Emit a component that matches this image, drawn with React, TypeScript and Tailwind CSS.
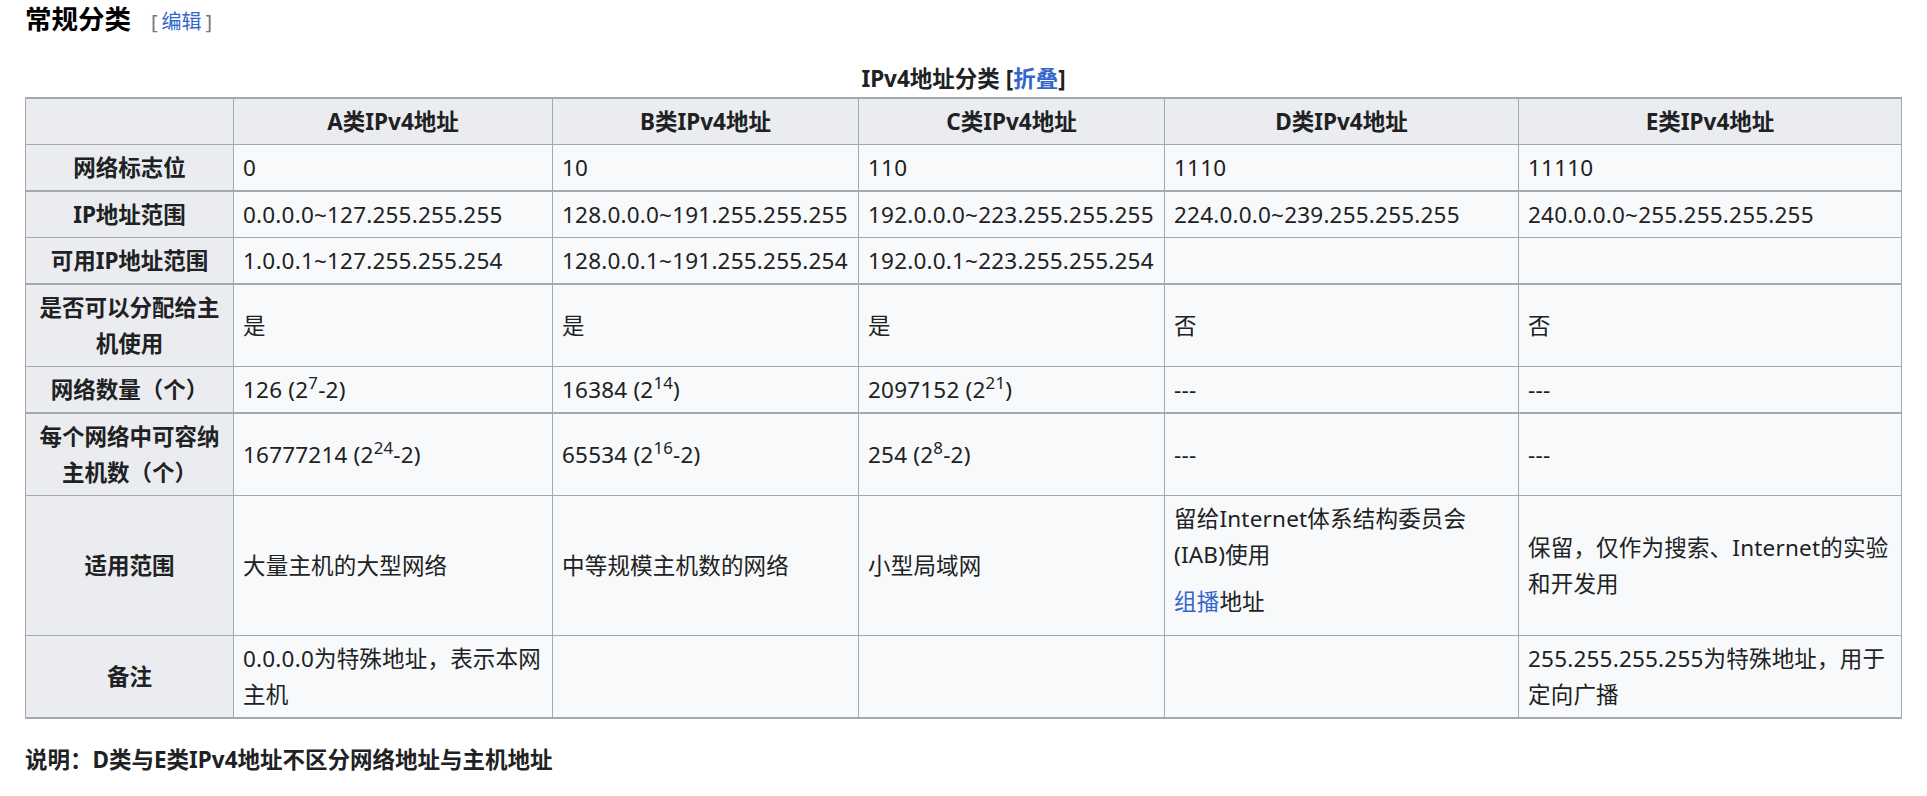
import React from 'react';

type Row = {
  head: React.ReactNode;
  cells: React.ReactNode[];
  thick?: boolean;
};

const rows: Row[] = [
  { head: "网络标志位", cells: ["0", "10", "110", "1110", "11110"], thick: true },
  {
    head: "IP地址范围",
    cells: [
      "0.0.0.0~127.255.255.255",
      "128.0.0.0~191.255.255.255",
      "192.0.0.0~223.255.255.255",
      "224.0.0.0~239.255.255.255",
      "240.0.0.0~255.255.255.255",
    ],
  },
  {
    head: "可用IP地址范围",
    cells: ["1.0.0.1~127.255.255.254", "128.0.0.1~191.255.255.254", "192.0.0.1~223.255.255.254", "", ""],
    thick: true,
  },
  { head: "是否可以分配给主机使用", cells: ["是", "是", "是", "否", "否"] },
  {
    head: "网络数量（个）",
    cells: [
      <>126 (2<sup>7</sup>-2)</>,
      <>16384 (2<sup>14</sup>)</>,
      <>2097152 (2<sup>21</sup>)</>,
      "---",
      "---",
    ],
    thick: true,
  },
  {
    head: "每个网络中可容纳主机数（个）",
    cells: [
      <>16777214 (2<sup>24</sup>-2)</>,
      <>65534 (2<sup>16</sup>-2)</>,
      <>254 (2<sup>8</sup>-2)</>,
      "---",
      "---",
    ],
  },
  {
    head: "适用范围",
    cells: [
      "大量主机的大型网络",
      "中等规模主机数的网络",
      "小型局域网",
      <>
        留给Internet体系结构委员会
        <br />
        (IAB)使用
        <p className="my-[11px]">
          <a className="text-[#3366cc]">组播</a>地址
        </p>
      </>,
      <>
        保留，仅作为搜索、Internet的实验
        <br />
        和开发用
      </>,
    ],
  },
  {
    head: "备注",
    cells: [
      <>
        0.0.0.0为特殊地址，表示本网
        <br />
        主机
      </>,
      "",
      "",
      "",
      <>
        255.255.255.255为特殊地址，用于
        <br />
        定向广播
      </>,
    ],
    thick: true,
  },
];

const classes = ["A", "B", "C", "D", "E"];

export default function App() {
  return (
    <div className="bg-white px-[25px] text-[#202122] font-['Noto_Sans','Noto_Sans_CJK_SC',sans-serif]">
      <div className="flex items-baseline h-[38px] leading-[38px]">
        <h3 className="text-[26.5px] font-bold text-black">常规分类</h3>
        <span className="ml-[20px] text-[20px] text-[#72777d]">
          [<a className="mx-[4px] text-[#3366cc]">编辑</a>]
        </span>
      </div>

      <table className="mt-[23px] w-full table-fixed border-collapse text-[22.5px] leading-[36px]">
        <caption className="font-bold">
          IPv4地址分类 [<a className="text-[#3366cc]">折叠</a>]
        </caption>
        <colgroup>
          <col className="w-[208px]" />
          <col className="w-[319px]" />
          <col className="w-[306px]" />
          <col className="w-[306px]" />
          <col className="w-[354px]" />
          <col />
        </colgroup>
        <thead>
          <tr>
            <th className="border border-t-2 border-[#a2a9b1] bg-[#eaecf0] px-[9px] py-[4.5px]" />
            {classes.map((c) => (
              <th
                key={c}
                className="border border-t-2 border-[#a2a9b1] bg-[#eaecf0] px-[9px] py-[4.5px] text-center font-bold"
              >
                {c}类IPv4地址
              </th>
            ))}
          </tr>
        </thead>
        <tbody>
          {rows.map((row, i) => (
            <tr key={i}>
              <th
                className={`border border-[#a2a9b1] bg-[#eaecf0] px-[9px] py-[4.5px] text-center align-middle font-bold ${
                  row.thick ? "border-b-2" : ""
                }`}
              >
                {row.head}
              </th>
              {row.cells.map((cell, j) => (
                <td
                  key={j}
                  className={`border border-[#a2a9b1] bg-[#f8f9fa] px-[9px] py-[4.5px] text-left align-middle tracking-[0.2px] ${
                    row.thick ? "border-b-2" : ""
                  }`}
                >
                  {cell}
                </td>
              ))}
            </tr>
          ))}
        </tbody>
      </table>

      <p className="mt-[23px] text-[22.5px] font-bold leading-[36px]">
        说明：D类与E类IPv4地址不区分网络地址与主机地址
      </p>
    </div>
  );
}
